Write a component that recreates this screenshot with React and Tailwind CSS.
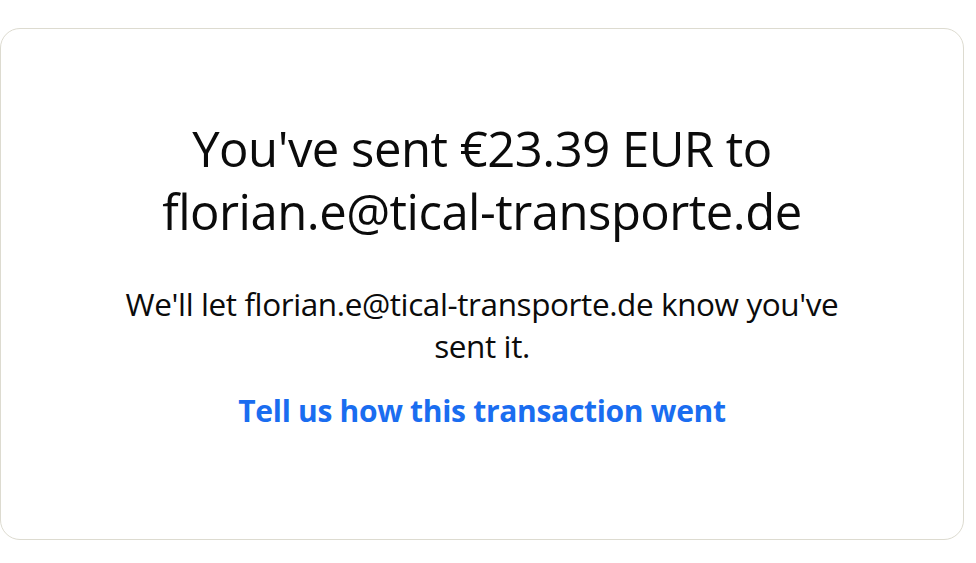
import React from 'react';

const font = { fontFamily: '"Open Sans", "Noto Sans", sans-serif' };

export default function App() {
  return (
    <div className="w-[976px] h-[563px] bg-white" style={font}>
      <div className="ml-0 mr-[12px] mt-[28px] h-[512px] rounded-[20px] border border-[#dddbd0] bg-white flex flex-col items-center pt-[88px] text-center">
        <h1 className="text-[49px] leading-[63px] font-normal text-[#0b0b0b] tracking-[-0.5px] w-[760px]">
          You've sent €23.39 EUR to florian.e@tical-transporte.de
        </h1>
        <p className="mt-[40px] text-[31.5px] leading-[42px] text-[#0b0b0b] w-[760px] tracking-[-0.4px]">
          We'll let florian.e@tical-transporte.de know you've sent it.
        </p>
        <a href="#" className="mt-[24px] text-[30px] leading-[40px] font-bold text-[#1a6df0] tracking-[-0.3px]">
          Tell us how this transaction went
        </a>
      </div>
    </div>
  );
}
